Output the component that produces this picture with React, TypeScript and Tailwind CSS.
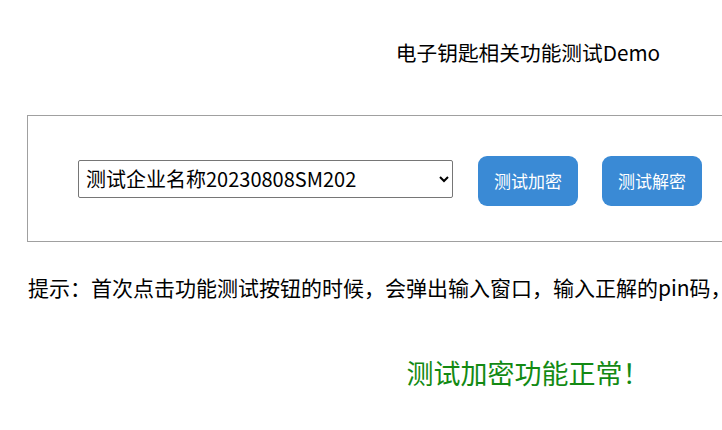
import React from "react";

const FONT = "font-['Microsoft_YaHei','Noto_Sans_CJK_SC',sans-serif]";

export default function App() {
  return (
    <div className={`w-[722px] h-[430px] overflow-hidden bg-white text-black ${FONT}`}>
      <div className="w-[1056px]">
        <h1 className="pt-[38px] text-center text-[20.7px] leading-[28px] font-normal">
          电子钥匙相关功能测试Demo
        </h1>

        <div className="mx-[27px] mt-[49px] h-[127px] border border-[#a0a0a0] flex items-center pl-[50px] pt-[5px]">
          <select
            className="mb-[5px] w-[375px] h-[38px] border border-[#767676] rounded-[2px] pl-[3px] pr-[10px] text-[20px] bg-white"
            defaultValue="a"
          >
            <option value="a">测试企业名称20230808SM202</option>
          </select>
          <button className="ml-[25px] w-[100px] h-[50px] rounded-[9px] bg-[#3a8ad5] text-white text-[17px]">
            测试加密
          </button>
          <button className="ml-[24px] w-[100px] h-[50px] rounded-[9px] bg-[#3a8ad5] text-white text-[17px]">
            测试解密
          </button>
        </div>

        <p className="mt-[31px] ml-[28px] text-[21px] leading-[28px] whitespace-nowrap">
          提示：首次点击功能测试按钮的时候，会弹出输入窗口，输入正解的pin码，登录后即可进行测试。
        </p>

        <p className="mt-[53px] text-center text-[27px] leading-[38px] text-[#138a13]">
          测试加密功能正常！
        </p>
      </div>
    </div>
  );
}
